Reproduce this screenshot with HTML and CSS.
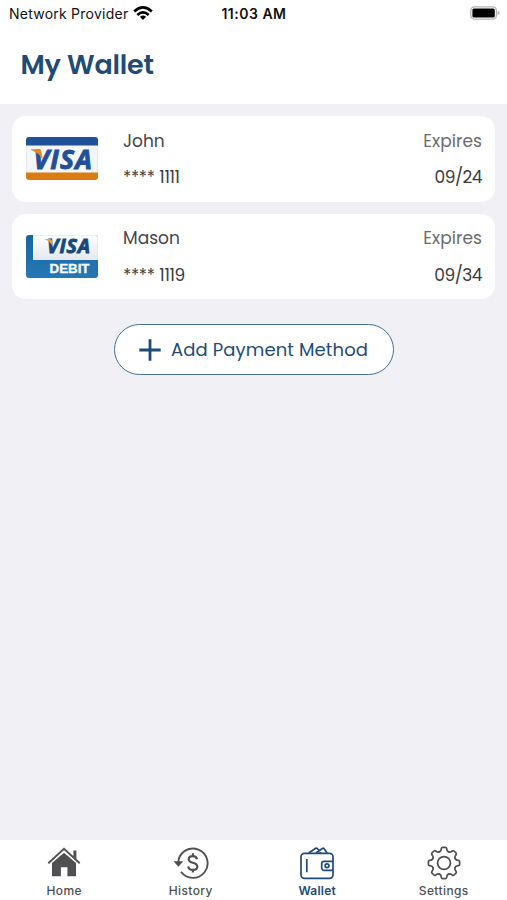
FILE: index.html
```html
<!DOCTYPE html>
<html lang="en">
<head>
<meta charset="utf-8">
<title>My Wallet</title>
<link rel="stylesheet" href="styles.css">
</head>
<body>
<div class="app">
  <header class="header">
    <div class="status">
      <div class="carrier"><span class="carrier-name">Network Provider</span>
        <svg class="wifi" width="20" height="14" viewBox="0 0 20 14"><g fill="none" stroke="#000" stroke-width="2.7"><path d="M1.2 5.5Q10 -2.600 18.800 5.500"/><path d="M4.300 8.900Q10 3.700 15.700 8.900"/></g><path d="M6.900 10.800Q10 8.400 13.100 10.800L10 13.900z"/></svg>
      </div>
      <span class="time">11:03 AM</span>
      <svg class="battery" width="30" height="14" viewBox="0 0 30 14"><rect x=".8" y=".8" width="25.6" height="12.4" rx="3.6" fill="#fff" stroke="#b4b4b4" stroke-width="1.3"/><rect x="2.4" y="2.4" width="22.4" height="9.2" rx="1.6"/><path d="M27.6 4.8q2.2.6 2.2 2.2t-2.2 2.2z" fill="#b4b4b4"/></svg>
    </div>
    <h1 class="title">My Wallet</h1>
  </header>
  <main class="content">
    <section class="card">
      <svg class="brand" width="72" height="43" viewBox="0 0 72 43">
        <rect x=".4" y=".4" width="71.2" height="42.2" rx="3" fill="#f4f5f7" stroke="#e1e3e7" stroke-width=".8"/>
        <path d="M0 8.500V3a3 3 0 0 1 3-3h66a3 3 0 0 1 3 3v5.500z" fill="#20509a"/>
        <path d="M0 35.500h72V40a3 3 0 0 1-3 3H3a3 3 0 0 1-3-3z" fill="#d97d10"/>
        <text class="visa" x="7.500" y="31.500" font-size="26.500" textLength="58.500" lengthAdjust="spacing" fill="#20509a" stroke="#20509a">VISA</text>
        <path d="M5 12.300h7.500q2.400 0 2.900 2.300l1.300 8Q12.500 15.500 5 13z" fill="#e18a22"/>
      </svg>
      <div class="details"><span>John</span><span class="number">**** 1111</span></div>
      <div class="expiry"><span class="label">Expires</span><span class="date">09/24</span></div>
    </section>
    <section class="card">
      <svg class="brand" width="72" height="43" viewBox="0 0 72 43">
        <defs><linearGradient id="blue" x1="0" y1="0" x2="0" y2="1"><stop offset="0" stop-color="#1b659f"/><stop offset="1" stop-color="#2478b5"/></linearGradient><linearGradient id="silver" x1="0" y1="0" x2="0" y2="1"><stop offset=".1" stop-color="#fbfcfd"/><stop offset="1" stop-color="#e4e8ef"/></linearGradient></defs>
        <rect width="72" height="43" rx="3" fill="url(#blue)"/>
        <path d="M7 0h62a3 3 0 0 1 3 3v22H7z" fill="url(#silver)"/>
        <path d="M7 .3h62a2.700 2.700 0 0 1 2.700 2.700v22" fill="none" stroke="#dfe3e9" stroke-width=".7"/>
        <text class="visa" x="21" y="18" font-size="19.500" textLength="43" lengthAdjust="spacing" fill="#17497e" stroke="#17497e">VISA</text>
        <path d="M18.500 3.900h5.300q1.700 0 2.100 1.700l.8 5.400Q23.500 5.900 18.500 3.900z" fill="#e9a23b"/>
        <text class="debit" x="23.500" y="38.300" font-size="12.700" textLength="40" lengthAdjust="spacingAndGlyphs" fill="#fff" stroke="#fff">DEBIT</text>
      </svg>
      <div class="details"><span>Mason</span><span class="number">**** 1119</span></div>
      <div class="expiry"><span class="label">Expires</span><span class="date">09/34</span></div>
    </section>
    <button class="add" type="button">
      <svg width="22" height="22" viewBox="0 0 22 22"><path d="M11 .3v21.400M.3 11h21.400" stroke="#1f4b77" stroke-width="2.800"/></svg>
      <span>Add Payment Method</span>
    </button>
  </main>
  <nav class="tabs">
    <a class="tab"><svg width="36" height="36" viewBox="0 0 36 36"><path d="M18 7.700 30 18v13.300h-8.600v-9h-6.500v9H6V18zM27.400 5.500h3v8.900l-3-2.800z" fill="#505052"/><path d="M2.300 18.200 18 3.800l15.700 14.400" fill="none" stroke="#505052" stroke-width="1.900"/></svg><span>Home</span></a>
    <a class="tab"><svg width="36" height="36" viewBox="0 0 36 36"><g fill="none" stroke="#505052" stroke-width="1.900"><path d="M5.300 16.800A14.700 14.700 0 1 1 8 26.800"/><path d="M24 14.300q-.6-3.200-4.300-3.200-4 0-4 3.200 0 2.500 4.100 3.500 4.500 1 4.500 3.900 0 3.200-4.400 3.200-4.300 0-4.700-3.500M19.900 8.300v2.800m0 13.800v2.600" stroke-width="2.100"/></g><path d="M.5 16.200h9.700l-4.800 5.500z" fill="#505052"/></svg><span>History</span></a>
    <a class="tab active"><svg width="36" height="36" viewBox="0 0 36 36"><g fill="none" stroke="#1f4b77" stroke-width="1.700" stroke-linejoin="round"><rect x="2" y="8.300" width="32" height="25" rx="3.500"/><path d="M7.800 14v13.300M34 16.300h-9a2.300 2.300 0 0 0-2.300 2.300v4.500a2.300 2.300 0 0 0 2.300 2.300h9"/><circle cx="28" cy="20.800" r="1.900"/><path d="m9.700 8 7-4.700q1-.6 1.600.2l3.500 4.500M17 8l6.400-4.500q1-.6 1.700.2l3 4.300"/></g></svg><span>Wallet</span></a>
    <a class="tab"><svg width="36" height="36" viewBox="-18 -18 36 36"><defs><path id="tooth" d="M-4.600-11.100Q-3.100-11.700-2.900-13.100L-2.700-14.300Q-2.500-15.600-1.400-15.600H1.400Q2.500-15.600 2.700-14.300L2.900-13.100Q3.100-11.700 4.600-11.100"/></defs><g fill="none" stroke="#505052" stroke-width="1.700" stroke-linecap="round"><use href="#tooth"/><use href="#tooth" transform="rotate(45)"/><use href="#tooth" transform="rotate(90)"/><use href="#tooth" transform="rotate(135)"/><use href="#tooth" transform="rotate(180)"/><use href="#tooth" transform="rotate(225)"/><use href="#tooth" transform="rotate(270)"/><use href="#tooth" transform="rotate(315)"/><circle r="6.400"/></g></svg><span>Settings</span></a>
  </nav>
</div>
</body>
</html>
```
FILE: styles.css
```css
* { box-sizing: border-box; }
body { margin: 0; font-family: Poppins, Inter, "Liberation Sans", sans-serif; }
.app { width: 507px; height: 900px; display: flex; flex-direction: column; background: #f0f0f5; overflow: hidden; }
.header { height: 104px; flex: none; background: #fff; }
.status { height: 27px; padding: 0 7px 0 9px; display: grid; grid-template-columns: 1fr auto 1fr; align-items: center; font: 14px/27px Inter, sans-serif; color: #111; }
.carrier { display: flex; align-items: center; gap: 5px; white-space: nowrap; }
.carrier-name { letter-spacing: 0.24px; }
.wifi { margin: -2px 0 0 0; }
.time { font-weight: 600; letter-spacing: 0.5px; margin-left: -1px; }
.battery { justify-self: end; margin-top: -1px; }
.title { margin: 17px 0 0 20.500px; font-size: 27px; line-height: 42px; font-weight: 600; letter-spacing: -0.2px; color: #1f4b77; }
.content { flex: 1; padding: 12px; display: flex; flex-direction: column; gap: 12px; }
.card { height: 85.500px; padding: 0 13px 0 13.500px; display: flex; align-items: center; background: #fff; border-radius: 14px; font-size: 17px; line-height: 26px; color: #464648; }
.brand { flex: none; }
.visa { font-family: "Open Sans", sans-serif; font-weight: 700; font-style: italic; stroke-width: 0.9px; }
.debit { font-family: "Liberation Sans", sans-serif; font-weight: 700; stroke-width: 0.3px; }
.details, .expiry { display: flex; flex-direction: column; gap: 10.500px; }
.details { margin-left: 25.500px; flex: 1; align-items: flex-start; }
.expiry { align-items: flex-end; }
.number { letter-spacing: -0.35px; word-spacing: 0.5px; color: #3c3c3e; }
.date { letter-spacing: -0.5px; color: #3c3c3e; }
.label { color: #6b6b6d; letter-spacing: 0.05px; }
.add { align-self: center; width: 280px; height: 51.500px; margin-top: 12.500px; padding: 1px 0 0; display: flex; align-items: center; justify-content: center; gap: 10px; border: 1.500px solid #486f94; border-radius: 26px; background: #fff; color: #1f4b77; font: 18px/26px Poppins, Inter, sans-serif; letter-spacing: 0.12px; white-space: nowrap; }
.tabs { height: 60px; flex: none; display: grid; grid-template-columns: repeat(4, 126.500px); background: #fff; }
.tab { display: flex; flex-direction: column; align-items: center; padding: 5px 0 0 2px; color: #505052; font: 500 12px/19px Inter, sans-serif; letter-spacing: 0.4px; }
.active { color: #1f4b77; font-weight: 600; letter-spacing: 0.2px; }
```
